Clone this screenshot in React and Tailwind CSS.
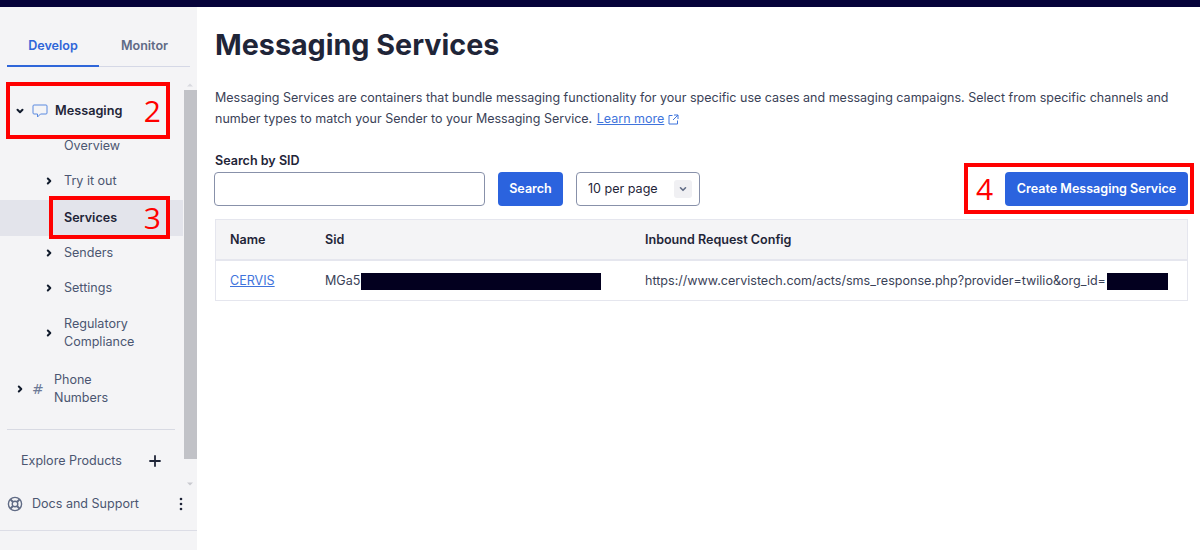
import React from "react";

const Chev = ({ down, className = "" }) => (
  <svg width="10" height="10" viewBox="0 0 10 10" className={className} fill="none" stroke="#121c2d" strokeWidth="2" strokeLinecap="round" strokeLinejoin="round">
    {down ? <path d="M2.5 3.8 5 6.3l2.5-2.5" /> : <path d="M3.8 2.5 6.3 5 3.8 7.5" />}
  </svg>
);

const SubRow = ({ label, chev, h, children }) => (
  <div className={`flex items-center pl-[44px] ${h}`}>
    <div className="w-[20px]">{chev && <Chev />}</div>
    <div className="text-[12.55px] leading-[18px] text-[#4b5671]">{children || label}</div>
  </div>
);

export default function App() {
  return (
    <div className="relative w-[1200px] h-[550px] overflow-hidden bg-white font-['Inter',sans-serif]">
      <div className="h-[7px] bg-[#06033a]" />
      <div className="flex h-[543px]">
        <aside className="w-[197px] shrink-0 bg-[#f4f4f6] flex flex-col">
          <div className="flex ml-[7px] mr-[7px] mt-[22px] h-[38px] border-b border-[#d5d8e6]">
            <div className="w-[92px] h-[38px] border-b-2 border-[#2f66d9] text-center text-[12.55px] font-semibold text-[#2f66d9] pt-[8px] leading-[18px]">Develop</div>
            <div className="flex-1 text-center text-[12.55px] font-semibold text-[#606b85] pt-[8px] leading-[18px]">Monitor</div>
          </div>
          <div className="flex flex-1 mt-[13px] h-[420px]">
            <div className="w-[183px] shrink-0">
              <div className="flex items-center h-[62px] pl-[15px]">
                <Chev down />
                <svg width="16" height="14" viewBox="0 0 16 14" fill="none" stroke="#5a8ae0" strokeWidth="1" strokeLinejoin="round" className="ml-[7px]">
                  <path d="M2 1h12a1 1 0 0 1 1 1v7a1 1 0 0 1-1 1H8.5L5.5 13v-3H2a1 1 0 0 1-1-1V2a1 1 0 0 1 1-1Z" />
                </svg>
                <span className="ml-[7px] text-[12.7px] font-semibold text-[#1f2538]">Messaging</span>
              </div>
              <div className="-mt-[8px]">
                <SubRow label="Overview" h="h-[24px]" />
                <div className="h-[11px]" />
                <SubRow label="Try it out" chev h="h-[24px]" />
              </div>
              <div className="flex items-center mt-[7px] h-[36px] bg-[#e3e4eb] pl-[64px] text-[12.55px] font-semibold text-[#1f2538]">Services</div>
              <div className="mt-[5px]" />
              <SubRow label="Senders" chev h="h-[24px]" />
              <div className="h-[11px]" />
              <SubRow label="Settings" chev h="h-[24px]" />
              <div className="h-[15px]" />
              <SubRow chev h="h-[36px]"><>Regulatory<br />Compliance</></SubRow>
              <div className="mt-[20px] flex items-center h-[36px] pl-[15px]">
                <Chev />
                <span className="ml-[7px] w-[22px] text-[14px] text-[#6e7a96] font-['DejaVu_Sans',sans-serif]">#</span>
                <span className="text-[12.55px] leading-[18px] text-[#4b5671]">Phone<br />Numbers</span>
              </div>
              <div className="ml-[7px] w-[168px] mt-[22px] border-t border-[#d8dae3]" />
              <div className="flex items-center mt-[20px] pl-[21px] h-[22px]">
                <span className="text-[12.55px] text-[#4b5671]">Explore Products</span>
                <svg width="12" height="12" viewBox="0 0 12 12" className="ml-[27px]" stroke="#1f2538" strokeWidth="1.8" strokeLinecap="round"><path d="M6 1v10M1 6h10" /></svg>
              </div>
            </div>
            <div className="w-[14px] shrink-0 flex flex-col items-center h-[408px]">
              <svg width="8" height="8" viewBox="0 0 8 8" className="mt-[1px]"><path d="M1 5.5 4 2.5l3 3Z" fill="#d9dae0" /></svg>
              <div className="w-[13px] h-[369px] mt-[1px] bg-[#c1c2c7]" />
              <div className="flex-1" />
              <svg width="8" height="8" viewBox="0 0 8 8"><path d="M1 2.5 4 5.5l3-3Z" fill="#c9cad0" /></svg>
            </div>
          </div>
          <div className="flex items-center h-[30px] pl-[7px] -mt-[7px]">
            <svg width="16" height="16" viewBox="0 0 16 16" fill="none" stroke="#606b85" strokeWidth="1.4">
              <circle cx="8" cy="8" r="6.6" />
              <circle cx="8" cy="8" r="2.8" />
              <path d="M3.4 3.4l2.6 2.6M12.6 3.4 10 6M3.4 12.6 6 10M12.6 12.6 10 10" strokeWidth="2" />
            </svg>
            <span className="ml-[9px] text-[12.55px] text-[#4b5671]">Docs and Support</span>
            <svg width="4" height="14" viewBox="0 0 4 14" className="ml-[40px]" fill="#1f2538"><circle cx="2" cy="2" r="1.3" /><circle cx="2" cy="7" r="1.3" /><circle cx="2" cy="12" r="1.3" /></svg>
          </div>
          <div className="mt-[11px] border-t border-[#dcdde6] h-[20px]" />
        </aside>
        <main className="flex-1 pl-[18px] pr-[12px]">
          <h1 className="mt-[20px] text-[28.7px] leading-[36px] font-bold text-[#1f2538]">Messaging Services</h1>
          <p className="mt-[24px] text-[12.5px] leading-[21px] text-[#3a4257]">
            Messaging Services are containers that bundle messaging functionality for your specific use cases and messaging campaigns. Select from specific channels and<br />
            number types to match your Sender to your Messaging Service.{" "}
            <span className="ml-px text-[#3f74dc] underline">Learn more</span>
            <svg width="11" height="11" viewBox="0 0 11 11" fill="none" stroke="#3f74dc" strokeWidth="1" className="inline ml-[4px] -mt-[1px]">
              <path d="M4.5 1.5H1v8.5h8.5V6.5M6 1h4v4M10 1 5 6" />
            </svg>
          </p>
          <div className="mt-[23px] text-[12.55px] leading-[18px] font-semibold text-[#1f2538]">Search by SID</div>
          <div className="flex items-center mt-[2px] -ml-px">
            <div className="w-[271px] h-[34px] bg-white border border-[#8891aa] rounded-[4px]" />
            <button className="ml-[13px] w-[65px] h-[34px] rounded-[4px] bg-[#2b63de] text-white text-[12.55px] font-semibold">Search</button>
            <div className="ml-[13px] w-[124px] h-[34px] border border-[#8891aa] rounded-[4px] flex items-center justify-between pl-[11px] pr-[7px] text-[12.55px] text-[#1f2538]">
              10 per page
              <span className="w-[18px] h-[18px] rounded-[3px] bg-[#f0f0f3] flex items-center justify-center"><svg width="10" height="10" viewBox="0 0 10 10" fill="none" stroke="#606b85" strokeWidth="1.6" strokeLinecap="round" strokeLinejoin="round"><path d="M2.5 3.8 5 6.3l2.5-2.5" /></svg></span>
            </div>
            <div className="flex-1" />
            <button className="w-[183px] h-[34px] rounded-[4px] bg-[#2b63de] text-white text-[12.55px] font-semibold">Create Messaging Service</button>
          </div>
          <div className="mt-[13px] border border-[#e5e6ee] border-b-0">
            <div className="flex h-[41px] pt-[2px] items-center bg-[#f4f4f6] border-b-2 border-[#e5e6ee] text-[12.55px] font-semibold text-[#1f2538]">
              <div className="w-[109px] pl-[14px]">Name</div>
              <div className="w-[320px]">Sid</div>
              <div>Inbound Request Config</div>
            </div>
            <div className="flex h-[40px] pt-[2px] items-center border-b border-[#e5e6ee] text-[12.55px] text-[#3a4257]">
              <div className="w-[109px] pl-[14px] text-[#3f74dc] underline">CERVIS</div>
              <div className="w-[320px] flex items-center">MGa5<span className="inline-block ml-px w-[240px] h-[17px] bg-[#03001f]" /></div>
              <div className="flex items-center">https://www.cervistech.com/acts/sms_response.php?provider=twilio&amp;org_id=<span className="inline-block ml-px w-[61px] h-[17px] bg-[#03001f]" /></div>
            </div>
          </div>
        </main>
      </div>

      <div className="absolute left-[6px] top-[82px] w-[164px] h-[57px] border-[4px] border-[#ff0000] flex items-center justify-end pr-[5px]">
        <span className="text-[#ff0000] text-[30px] leading-none font-['Open_Sans',sans-serif]">2</span>
      </div>
      <div className="absolute left-[49px] top-[196px] w-[121px] h-[43px] border-[4px] border-[#ff0000] flex items-center justify-end pr-[5px]">
        <span className="text-[#ff0000] text-[30px] leading-none font-['Open_Sans',sans-serif]">3</span>
      </div>
      <div className="absolute left-[964px] top-[163px] w-[230px] h-[51px] border-[4px] border-[#ff0000] flex items-center pl-[8px]">
        <span className="text-[#ff0000] text-[30px] leading-none font-['Open_Sans',sans-serif]">4</span>
      </div>
    </div>
  );
}
